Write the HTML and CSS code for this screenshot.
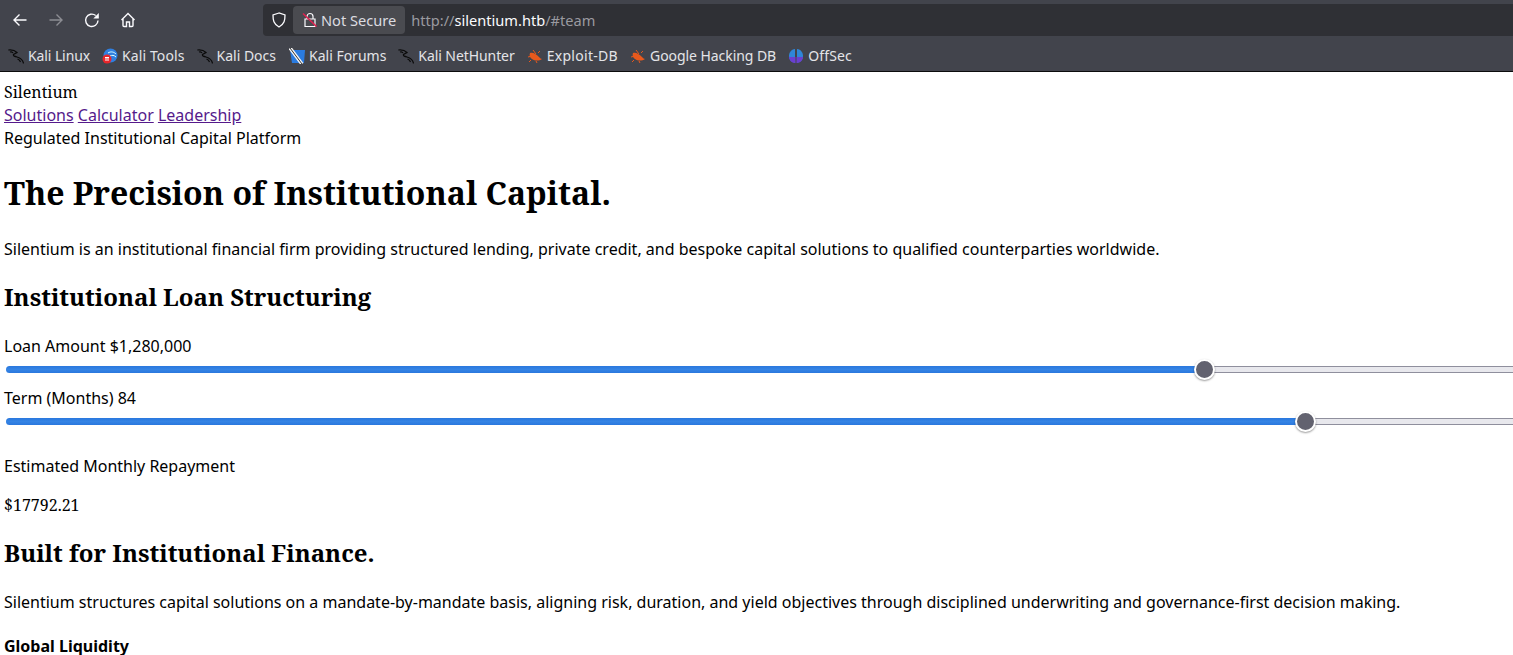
FILE: index.html
```html
<!DOCTYPE html>
<html lang="en">
<head>
<meta charset="utf-8">
<title>Silentium</title>
<link rel="stylesheet" href="styles.css">
</head>
<body>
<header class="chrome">
  <div class="toolbar">
    <nav class="nav-buttons">
      <svg class="nav-icon" viewBox="0 0 16 16"><path d="M14.500 8H2M7.500 2.500 2 8l5.500 5.500"/></svg>
      <svg class="nav-icon dim" viewBox="0 0 16 16"><path d="M1.500 8H14M8.500 2.500 14 8l-5.500 5.500"/></svg>
      <svg class="nav-icon" viewBox="0 0 16 16"><path d="M14 8.500a6.200 6.200 0 1 1-2.300-5"/><path class="solid" d="M14.800 1v5.500H9.300z"/></svg>
      <svg class="nav-icon" viewBox="0 0 16 16"><path d="M1.500 8 8 1.500 14.500 8M3 6.800v6.700q0 1 1 1h2.500v-4.500h3v4.500H12q1 0 1-1V6.800"/></svg>
    </nav>
    <div class="urlbar">
      <svg class="shield" viewBox="0 0 16 16"><path d="M8 1 2 3c0 5 .5 9 6 12 5.500-3 6-7 6-12z"/></svg>
      <div class="secure">
        <svg class="lock" viewBox="0 0 16 16"><path class="lock-body" d="M5 7V4.500a3 3 0 0 1 6 0V7M3 7h10v7.500H3z"/><path class="lock-slash" d="M1 1.500 14.500 14.500"/></svg>
        <span>Not Secure</span>
      </div>
      <div class="url"><span class="url-dim">http://</span><span class="url-host">silentium.htb</span><span class="url-dim">/#team</span></div>
    </div>
  </div>
  <div class="bookmarks">
    <a class="bookmark bm-linux"><svg class="fav" viewBox="0 0 16 16"><use href="#dragon"/></svg>Kali Linux</a>
    <a class="bookmark bm-tools"><svg class="fav" viewBox="0 0 16 16"><circle cx="8.500" cy="7.500" r="7" fill="#2f7fe0"/><path d="M6 5c3-2 6-1 8 1M8 8c2-1 4-1 6 1" fill="none" stroke="#dff" stroke-width="1"/><circle cx="5" cy="11" r="4.500" fill="#e8262b"/><path d="M3 9.500h4M4 9.500v3.500M6 9.500v3.500" stroke="#fff" fill="none"/></svg>Kali Tools</a>
    <a class="bookmark"><svg class="fav" viewBox="0 0 16 16"><use href="#dragon"/></svg>Kali Docs</a>
    <a class="bookmark bm-forums"><svg class="fav" viewBox="0 0 16 16"><path d="M1 2h15l-1 13H3z" fill="#2a7be0"/><path d="M1 0 13 16" stroke="#f4f4f4" stroke-width="3.500"/><path d="M1 0 13 16" stroke="#333" stroke-width="1"/></svg>Kali Forums</a>
    <a class="bookmark bm-hunter"><svg class="fav" viewBox="0 0 16 16"><use href="#dragon"/></svg>Kali NetHunter</a>
    <a class="bookmark bm-exploit"><svg class="fav" viewBox="0 0 16 16"><use href="#bug"/></svg>Exploit-DB</a>
    <a class="bookmark bm-google"><svg class="fav" viewBox="0 0 16 16"><use href="#bug"/></svg>Google Hacking DB</a>
    <a class="bookmark bm-offsec"><svg class="fav" viewBox="0 0 16 16"><path d="M7 1C3 1.500 1 4.500 1 8s2 6 6 7z" fill="#2f86d8"/><path d="M9 1c4 .5 6 3.500 6 7s-2 6-6 7z" fill="#2f86d8"/><path d="M1 9c0 3 3 6 6 6V9zM15 9c0 3-3 6-6 6V9z" fill="#6a3fd0"/><path d="M8 9v6" stroke="#6a3fd0"/></svg>OffSec</a>
  </div>
  <svg class="defs" width="0" height="0">
    <defs>
      <g id="dragon" fill="none" stroke="#0a0a0a" stroke-width="1.200"><path d="M.3 2C4 1.500 7 2.500 9 4.500L5.500 6.500C5 8 7 8.500 9 9c3 .8 6 3 6.500 6.500"/><path d="M2 4c1.500-.5 2.500 0 3 1M9.500 11c1.500.5 2.500 1.500 3 3"/></g>
      <g id="bug"><path d="M3 5c3-1 6 1 9 4 1 1 2 2 3 2-3 2-7 2-10 0C3 10 2 7 3 5z" fill="#e9591c"/><path d="M6 2l3 4M1 9l4-1M11 5l2-2M9 13l1 2M4 12l-2 2" stroke="#e9591c" fill="none"/></g>
    </defs>
  </svg>
</header>
<main class="page">
  <div class="brand">Silentium</div>
  <div><a class="link" href="#solutions">Solutions</a> <a class="link" href="#calculator">Calculator</a> <a class="link" href="#leadership">Leadership</a></div>
  <div>Regulated Institutional Capital Platform</div>
  <h1>The Precision of Institutional Capital.</h1>
  <p>Silentium is an institutional financial firm providing structured lending, private credit, and bespoke capital solutions to qualified counterparties worldwide.</p>
  <h2>Institutional Loan Structuring</h2>
  <div class="field">
    <label>Loan Amount $1,280,000</label>
    <div class="slider"><input class="range range-loan" type="range" min="0" max="2000" value="1189" aria-label="Loan Amount"></div>
  </div>
  <div class="field">
    <label>Term (Months) 84</label>
    <div class="slider"><input class="range range-term" type="range" min="0" max="2000" value="1290" aria-label="Term"></div>
  </div>
  <p class="estimate">Estimated Monthly Repayment</p>
  <p class="amount">$17792.21</p>
  <h2>Built for Institutional Finance.</h2>
  <p>Silentium structures capital solutions on a mandate-by-mandate basis, aligning risk, duration, and yield objectives through disciplined underwriting and governance-first decision making.</p>
  <h3>Global Liquidity</h3>
</main>
</body>
</html>
```
FILE: styles.css
```css
html, body {
  margin: 0;
  height: 655px;
  overflow: hidden;
  background: #fff;
}
body {
  font-family: "Noto Sans", sans-serif;
  font-size: 16px;
  color: #000;
}
.chrome {
  background: #42444c;
  height: 71px;
  border-bottom: 1px solid #0c0c0d;
  color: #fbfbfe;
}
.toolbar {
  display: flex;
  align-items: center;
  height: 40px;
  padding-left: 12px;
}
.nav-buttons {
  display: flex;
  gap: 20px;
  width: 251px;
}
.nav-icon {
  width: 16px;
  height: 16px;
  fill: none;
  stroke: #fbfbfe;
  stroke-width: 1.400;
}
.nav-icon.dim {
  opacity: .4;
}
.nav-icon .solid {
  fill: #fbfbfe;
  stroke: none;
}
.urlbar {
  flex: 1;
  display: flex;
  align-items: center;
  height: 32px;
  background: #2f3035;
  border-radius: 4px 0 0 4px;
  padding-left: 8px;
}
.shield {
  width: 16px;
  height: 16px;
  fill: none;
  stroke: #fbfbfe;
  stroke-width: 1.300;
}
.secure {
  display: flex;
  align-items: center;
  gap: 3px;
  height: 28px;
  margin-left: 6px;
  padding: 0 9px;
  background: #4a4b50;
  border-radius: 4px;
  font-size: 14.600px;
  color: #dcdce0;
}
.lock {
  width: 16px;
  height: 16px;
}
.lock-body {
  fill: none;
  stroke: #fbfbfe;
  stroke-width: 1.200;
}
.lock-slash {
  stroke: #e0204f;
  stroke-width: 1.600;
}
.url {
  margin-left: 6px;
  font-size: 14.600px;
}
.url-dim {
  color: #9a9aa0;
}
.url-host {
  color: #fbfbfe;
}
.bookmarks {
  display: flex;
  align-items: center;
  height: 31px;
  padding-left: 8px;
  gap: 12px;
  font-size: 14px;
  color: #e4e4e8;
}
.bookmark {
  display: flex;
  align-items: center;
  gap: 4px;
}
.bm-linux {
  letter-spacing: -.1px;
}
.bm-tools {
  letter-spacing: .1px;
}
.bm-forums {
  margin-left: 1px;
}
.bm-hunter {
  letter-spacing: -.08px;
}
.bm-exploit {
  letter-spacing: .3px;
}
.bm-google {
  letter-spacing: -.06px;
}
.bm-offsec {
  letter-spacing: .15px;
}
.fav {
  width: 16px;
  height: 16px;
}
.defs {
  position: absolute;
}
.page {
  padding: 9px 4px 0;
  line-height: 23px;
}
.brand, .amount {
  font-family: "Noto Serif", "DejaVu Serif", serif;
}
.link {
  color: #551a8b;
  text-decoration: underline;
}
h1, h2, h3 {
  font-family: "Noto Serif", "DejaVu Serif", serif;
  font-weight: 700;
}
h1 {
  font-size: 32px;
  line-height: 44px;
  margin: 21px 0 23px;
}
h2 {
  font-size: 24px;
  line-height: 33px;
  margin: 19px 0 22px;
}
h3 {
  font-family: "Noto Sans", sans-serif;
  font-size: 16px;
  margin: 21px 0;
}
p {
  margin: 16px 0;
}
.slider {
  height: 29px;
}
.range {
  -webkit-appearance: none;
  appearance: none;
  display: block;
  margin: 0 0 0 1.500px;
  width: 2020px;
  height: 22px;
  background: transparent;
}
.range::-webkit-slider-runnable-track {
  height: 7px;
  border-radius: 3.500px;
  background: linear-gradient(#8f8f9d 1px, #e8e8ed 1px, #e8e8ed 6px, #8f8f9d 6px);
}
.range-loan::-webkit-slider-runnable-track {
  background: linear-gradient(#2a78de, #3584e4 50%, #2a78de) 0 0 / 1195px 100% no-repeat, linear-gradient(#8f8f9d 1px, #e8e8ed 1px, #e8e8ed 6px, #8f8f9d 6px);
}
.range-term::-webkit-slider-runnable-track {
  background: linear-gradient(#2a78de, #3584e4 50%, #2a78de) 0 0 / 1295px 100% no-repeat, linear-gradient(#8f8f9d 1px, #e8e8ed 1px, #e8e8ed 6px, #8f8f9d 6px);
}
.range::-webkit-slider-thumb {
  -webkit-appearance: none;
  appearance: none;
  box-sizing: border-box;
  width: 21px;
  height: 21px;
  margin-top: -7px;
  border-radius: 50%;
  background: #62626f;
  border: 2px solid #fff;
  box-shadow: 0 1px 2px rgba(0, 0, 0, .4);
}
```
